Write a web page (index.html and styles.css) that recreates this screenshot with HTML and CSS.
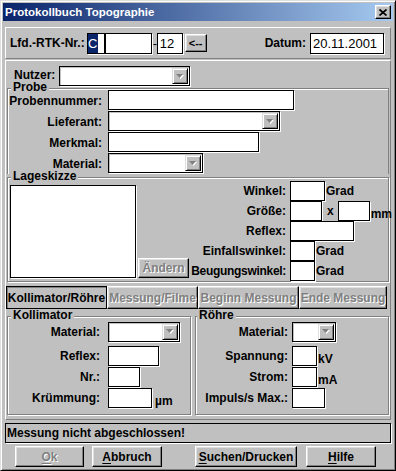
FILE: index.html
```html
<!DOCTYPE html>
<html lang="de">
<head>
<meta charset="utf-8">
<title>Protokollbuch Topographie</title>
<link rel="stylesheet" href="styles.css">
</head>
<body>
<div class="win">
  <div class="titlebar">
    <span class="title">Protokollbuch Topographie</span>
    <span class="close"><svg width="8" height="7" viewBox="0 0 8 7"><path d="M0.5 0.5L7.5 6.5M7.5 0.5L0.5 6.5" stroke="#000" stroke-width="1.7"/></svg></span>
  </div>

  <div class="panel p1">
    <span class="lbl lfd">Lfd.-RTK-Nr.:</span>
    <span class="box rtk"><span class="sel">C</span><span class="caret"></span></span>
    <span class="dash">-</span>
    <span class="box nr">12</span>
    <span class="btn back">&lt;--</span>
    <span class="spacer"></span>
    <span class="lbl datlbl">Datum:</span>
    <span class="box datum">20.11.2001</span>
  </div>

  <div class="panel p2">
    <div class="nutzer">
      <span class="lbl">Nutzer:</span>
      <span class="combo w131"><span class="dd"><svg width="8" height="5" viewBox="0 0 8 5"><path d="M1 1h7l-3.5 4z" fill="#fff"/><path d="M0 0h7l-3.5 4z" fill="#808080"/></svg></span></span>
    </div>

    <fieldset class="grp probe">
      <legend>Probe</legend>
      <div class="rows">
        <div class="row"><label>Probennummer:</label><span class="box w186"></span></div>
        <div class="row"><label>Lieferant:</label><span class="combo w172"><span class="dd"><svg width="8" height="5" viewBox="0 0 8 5"><path d="M1 1h7l-3.5 4z" fill="#fff"/><path d="M0 0h7l-3.5 4z" fill="#808080"/></svg></span></span></div>
        <div class="row"><label>Merkmal:</label><span class="box w151"></span></div>
        <div class="row"><label>Material:</label><span class="combo w95"><span class="dd"><svg width="8" height="5" viewBox="0 0 8 5"><path d="M1 1h7l-3.5 4z" fill="#fff"/><path d="M0 0h7l-3.5 4z" fill="#808080"/></svg></span></span></div>
      </div>
    </fieldset>

    <fieldset class="grp lage">
      <legend>Lageskizze</legend>
      <div class="lage-body">
        <div class="sketch"></div>
        <span class="btn dis aendern">Ändern</span>
        <div class="geo">
          <div class="row"><label>Winkel:</label><span class="box w35"></span><span class="unit">Grad</span></div>
          <div class="row"><label>Größe:</label><span class="box w32"></span><span class="times">x</span><span class="box w32"></span><span class="unit bot">mm</span></div>
          <div class="row"><label>Reflex:</label><span class="box w64"></span></div>
          <div class="row"><label>Einfallswinkel:</label><span class="box w25"></span><span class="unit">Grad</span></div>
          <div class="row"><label class="tight">Beugungswinkel:</label><span class="box w25"></span><span class="unit">Grad</span></div>
        </div>
      </div>
    </fieldset>

    <div class="tabs">
      <span class="tab on t1">Kollimator/Röhre</span>
      <span class="tab dis t2">Messung/Filme</span>
      <span class="tab dis t3">Beginn Messung</span>
      <span class="tab dis t4">Ende Messung</span>
    </div>

    <div class="bottom">
      <fieldset class="grp kol">
        <legend>Kollimator</legend>
        <div class="rows">
          <div class="row r1"><label>Material:</label><span class="combo w72"><span class="dd"><svg width="8" height="5" viewBox="0 0 8 5"><path d="M1 1h7l-3.5 4z" fill="#fff"/><path d="M0 0h7l-3.5 4z" fill="#808080"/></svg></span></span></div>
          <div class="row"><label>Reflex:</label><span class="box w51"></span></div>
          <div class="row"><label>Nr.:</label><span class="box w32"></span></div>
          <div class="row"><label>Krümmung:</label><span class="box w44"></span><span class="unit bot um">µm</span></div>
        </div>
      </fieldset>
      <fieldset class="grp roe">
        <legend>Röhre</legend>
        <div class="rows">
          <div class="row r1"><label>Material:</label><span class="combo w44"><span class="dd"><svg width="8" height="5" viewBox="0 0 8 5"><path d="M1 1h7l-3.5 4z" fill="#fff"/><path d="M0 0h7l-3.5 4z" fill="#808080"/></svg></span></span></div>
          <div class="row"><label>Spannung:</label><span class="box w25"></span><span class="unit bot">kV</span></div>
          <div class="row"><label>Strom:</label><span class="box w25"></span><span class="unit bot">mA</span></div>
          <div class="row"><label>Impuls/s Max.:</label><span class="box w33"></span></div>
        </div>
      </fieldset>
    </div>
  </div>

  <div class="status">Messung nicht abgeschlossen!</div>

  <div class="buttons">
    <span class="btn dis b-ok"><u>O</u>k</span>
    <span class="btn b-abbruch"><u>A</u>bbruch</span>
    <span class="btn b-suchen"><u>S</u>uchen/Drucken</span>
    <span class="btn b-hilfe"><u>H</u>ilfe</span>
  </div>
</div>
</body>
</html>
```

FILE: styles.css
```css
* { box-sizing: border-box; }
html, body { margin: 0; padding: 0; }
body {
  background: #c0c0c0;
  font-family: "Liberation Sans", Arial, sans-serif;
  font-size: 12px;
  font-weight: bold;
  color: #000;
}

.win {
  width: 396px;
  height: 471px;
  border: 1px solid;
  border-color: #dfdfdf #000 #000 #dfdfdf;
  box-shadow: inset 1px 1px #fff, inset -1px -1px #808080;
  padding: 2px;
  background: #c0c0c0;
  display: flex;
  flex-direction: column;
}

.titlebar {
  flex: none;
  height: 18px;
  display: flex;
  align-items: center;
  padding-left: 2px;
  background: linear-gradient(to right, #0a246a, #a6caf0);
  color: #fff;
  font-size: 11.5px;
}
.close {
  margin-left: auto;
  margin-right: 2px;
  width: 16px;
  height: 14px;
  display: flex;
  align-items: center;
  justify-content: center;
  background: #c0c0c0;
  border: 1px solid;
  border-color: #fff #000 #000 #fff;
  box-shadow: inset -1px -1px #808080, inset 1px 1px #dfdfdf;
}

.panel {
  flex: none;
  margin: 0 2px;
  border: 1px solid;
  border-color: #fff #808080 #808080 #fff;
}
.p1 {
  margin-top: 6px;
  height: 32px;
  display: flex;
  align-items: center;
  padding-left: 4px;
}
.p2 {
  margin-top: 1px;
  padding-bottom: 4px;
}

.lbl { white-space: nowrap; }
.lfd { margin-right: 2px; }
.datlbl { margin-right: 4px; }
.spacer { flex: 1; }

.box {
  display: flex;
  align-items: center;
  flex: none;
  height: 20px;
  background: #fff;
  border: 1px solid #000;
  box-shadow: 1px 1px 0 #fff;
  font-weight: normal;
  font-size: 13px;
}
.rtk { width: 65px; height: 21px; padding: 0; align-items: stretch; }
.sel {
  width: 10px;
  background: #0a246a;
  color: #fff;
  display: flex;
  align-items: center;
  justify-content: center;
}
.caret { width: 2px; background: #000; margin-left: 6px; }
.dash { margin: 0 0 0 1px; width: 4px; font-weight: normal; font-size: 13px; }
.nr { width: 26px; height: 21px; padding-left: 2px; }
.back {
  width: 22px;
  height: 18px;
  margin-left: 2px;
  font-size: 11px;
}
.datum { width: 74px; height: 21px; margin-right: 6px; padding-left: 2px; }

.btn {
  display: flex;
  align-items: center;
  justify-content: center;
  flex: none;
  white-space: nowrap;
  background: #c0c0c0;
  border: 1px solid;
  border-color: #fff #000 #000 #fff;
  box-shadow: inset -1px -1px #808080, inset 1px 1px #dfdfdf;
}
.btn u { text-decoration-thickness: 1px; text-underline-offset: 2px; }
.dis { color: #808080; text-shadow: 1px 1px 0 #fff; }

.combo {
  display: flex;
  justify-content: flex-end;
  flex: none;
  height: 20px;
  background: #fff;
  border: 1px solid #000;
  padding: 1px;
  box-shadow: inset 1px 1px #c0c0c0, 1px 1px 0 #fff;
}
.dd {
  width: 16px;
  height: 100%;
  display: flex;
  align-items: center;
  justify-content: center;
  background: #c0c0c0;
  border: 1px solid;
  border-color: #dfdfdf #000 #000 #dfdfdf;
  box-shadow: inset 1px 1px #fff, inset -1px -1px #808080;
}

.w25 { width: 25px; }
.w32 { width: 32px; }
.w33 { width: 33px; }
.w35 { width: 35px; }
.w44 { width: 44px; }
.w51 { width: 51px; }
.w64 { width: 64px; }
.w72 { width: 72px; }
.w95 { width: 95px; }
.w131 { width: 131px; }
.w151 { width: 151px; }
.w172 { width: 172px; }
.w186 { width: 186px; }

.nutzer {
  display: flex;
  align-items: center;
  height: 20px;
  margin-top: 5px;
  padding-left: 8px;
  gap: 4px;
}
.nutzer .lbl { line-height: 11px; margin-top: -2px; }

.grp {
  min-width: 0;
  margin: 0 1px;
  padding: 0 0 0 1px;
  border: 1px solid #808080;
  box-shadow: inset 1px 1px #fff, 1px 1px 0 #fff;
}
.grp legend {
  padding: 0 2px 2px;
  margin-left: 2px;
  line-height: 13px;
  height: 15px;
  background: #c0c0c0;
}

.row {
  display: flex;
  align-items: center;
  height: 20px;
  margin-bottom: 1px;
}
.row > label {
  flex: none;
  display: flex;
  justify-content: flex-end;
  white-space: nowrap;
}

.probe {
  margin-top: -5px;
  border-bottom: none;
  box-shadow: inset 1px 1px #fff;
}
.probe .rows { margin-top: -6px; }
.probe label { width: 93px; margin-right: 6px; padding-top: 2px; }

.lage { margin-top: -4px; }
.lage-body {
  display: flex;
  align-items: flex-start;
}
.sketch {
  flex: none;
  width: 126px;
  height: 93px;
  margin-left: 1px;
  background: #fff;
  border: 1px solid #000;
  box-shadow: 1px 1px 0 #fff;
}
.aendern {
  width: 51px;
  height: 20px;
  margin-left: 2px;
  align-self: flex-end;
  margin-bottom: 3px;
}
.geo { margin-top: -4px; }
.geo .row { margin-bottom: 0; }
.geo label { width: 97px; margin-right: 4px; }
.geo label.tight { letter-spacing: -0.3px; }
.unit { margin-left: 1px; }
.unit.bot { align-self: flex-end; line-height: 13px; }
.um { margin-left: 3px; }
.times { margin: 0 4px 0 5px; }

.tabs {
  display: flex;
  height: 23px;
  margin-top: 4px;
}
.tab {
  display: flex;
  align-items: center;
  justify-content: center;
  white-space: nowrap;
  background: #c0c0c0;
  border: 1px solid;
  border-color: #fff #000 #000 #fff;
  box-shadow: inset -1px -1px #808080, inset 1px 1px #dfdfdf;
}
.tab.on {
  border-color: #000;
  box-shadow: inset 1px 1px #808080;
}
.t1 { width: 101px; }
.t2 { width: 91px; }
.t3 { width: 101px; }
.t4 { width: 88px; }

.bottom {
  display: flex;
  gap: 4px;
  margin: 0 1px;
}
.bottom .grp { margin: 0; padding-bottom: 5px; }
.kol { flex: none; width: 184px; }
.roe { flex: 1; }
.roe legend { margin-left: 0; }
.bottom .rows { margin-top: -3px; }
.bottom .r1 { height: 21px; margin-bottom: 4px; }
.kol label { width: 91px; margin-right: 8px; }
.roe label { width: 91px; margin-right: 4px; }

.status {
  flex: none;
  margin: 3px 2px 0;
  height: 20px;
  display: flex;
  align-items: center;
  padding-left: 1px;
  border: 1px solid #000;
  box-shadow: 1px 1px 0 #fff;
  white-space: nowrap;
}

.buttons {
  flex: none;
  display: flex;
  height: 21px;
  margin-top: 3px;
  padding-left: 12px;
}
.buttons .btn { height: 21px; }
.b-ok { width: 69px; }
.b-abbruch { width: 70px; margin-left: 8px; }
.b-suchen { width: 102px; margin-left: 33px; }
.b-hilfe { width: 70px; margin-left: 9px; }
```
